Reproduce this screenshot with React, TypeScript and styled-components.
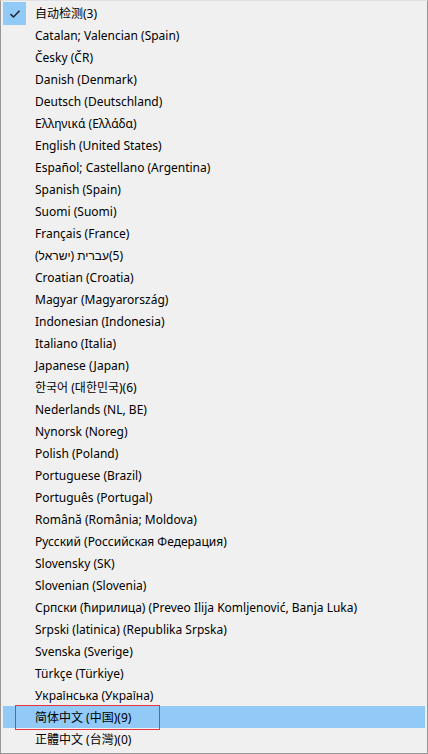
import React from 'react';
import styled, { createGlobalStyle } from 'styled-components';

const GlobalStyle = createGlobalStyle`
  html, body {
    margin: 0;
    padding: 0;
    background: #f0f0f0;
  }
`;

const Menu = styled.div`
  box-sizing: border-box;
  width: 428px;
  height: 754px;
  background: #f0f0f0;
  border: 1px solid #979797;
  border-top-color: #e0e0e0;
  padding: 1px 2px 0 2px;
  font-family: "Segoe UI", "Noto Sans", "Noto Sans CJK SC", sans-serif;
  font-size: 12px;
  color: #000;
  overflow: hidden;
`;

const Row = styled.div<{ $hover?: boolean }>`
  position: relative;
  display: flex;
  align-items: center;
  height: 22px;
  background: ${(p) => (p.$hover ? '#91c9f7' : 'transparent')};
  white-space: nowrap;
`;

const CheckBox = styled.div`
  position: absolute;
  left: 0;
  top: 0;
  width: 23px;
  height: 23px;
  background: #91c9f7;
  display: flex;
  align-items: center;
  justify-content: center;
`;

const Label = styled.span`
  padding-left: 32px;
  line-height: 22px;
  transform: translateY(1px);
`;

const Marker = styled.div`
  position: absolute;
  left: 12px;
  top: -1px;
  width: 143px;
  height: 23px;
  border: 1px solid #e8323c;
`;

const items = [
  '自动检测(3)',
  'Catalan; Valencian (Spain)',
  'Česky (ČR)',
  'Danish (Denmark)',
  'Deutsch (Deutschland)',
  'Ελληνικά (Ελλάδα)',
  'English (United States)',
  'Español; Castellano (Argentina)',
  'Spanish (Spain)',
  'Suomi (Suomi)',
  'Français (France)',
  '\u2068עברית (ישראל)\u2069(5)',
  'Croatian (Croatia)',
  'Magyar (Magyarország)',
  'Indonesian (Indonesia)',
  'Italiano (Italia)',
  'Japanese (Japan)',
  '한국어 (대한민국)(6)',
  'Nederlands (NL, BE)',
  'Nynorsk (Noreg)',
  'Polish (Poland)',
  'Portuguese (Brazil)',
  'Português (Portugal)',
  'Română (România; Moldova)',
  'Русский (Российская Федерация)',
  'Slovensky (SK)',
  'Slovenian (Slovenia)',
  'Српски (ћирилица) (Preveo Ilija Komljenović, Banja Luka)',
  'Srpski (latinica) (Republika Srpska)',
  'Svenska (Sverige)',
  'Türkçe (Türkiye)',
  'Українська (Україна)',
  '简体中文 (中国)(9)',
  '正體中文 (台灣)(0)',
];

const Check = () => (
  <svg width="12" height="10" viewBox="0 0 12 10">
    <path d="M1.5 5.2 L4.5 8 L10.5 1.8" fill="none" stroke="#1e2a36" strokeWidth="1.6" />
  </svg>
);

export default function App() {
  return (
    <>
      <GlobalStyle />
      <Menu>
        {items.map((text, i) => (
          <Row key={i} $hover={i === 32}>
            {i === 0 && (
              <CheckBox>
                <Check />
              </CheckBox>
            )}
            {i === 32 && <Marker />}
            <Label>{text}</Label>
          </Row>
        ))}
      </Menu>
    </>
  );
}
